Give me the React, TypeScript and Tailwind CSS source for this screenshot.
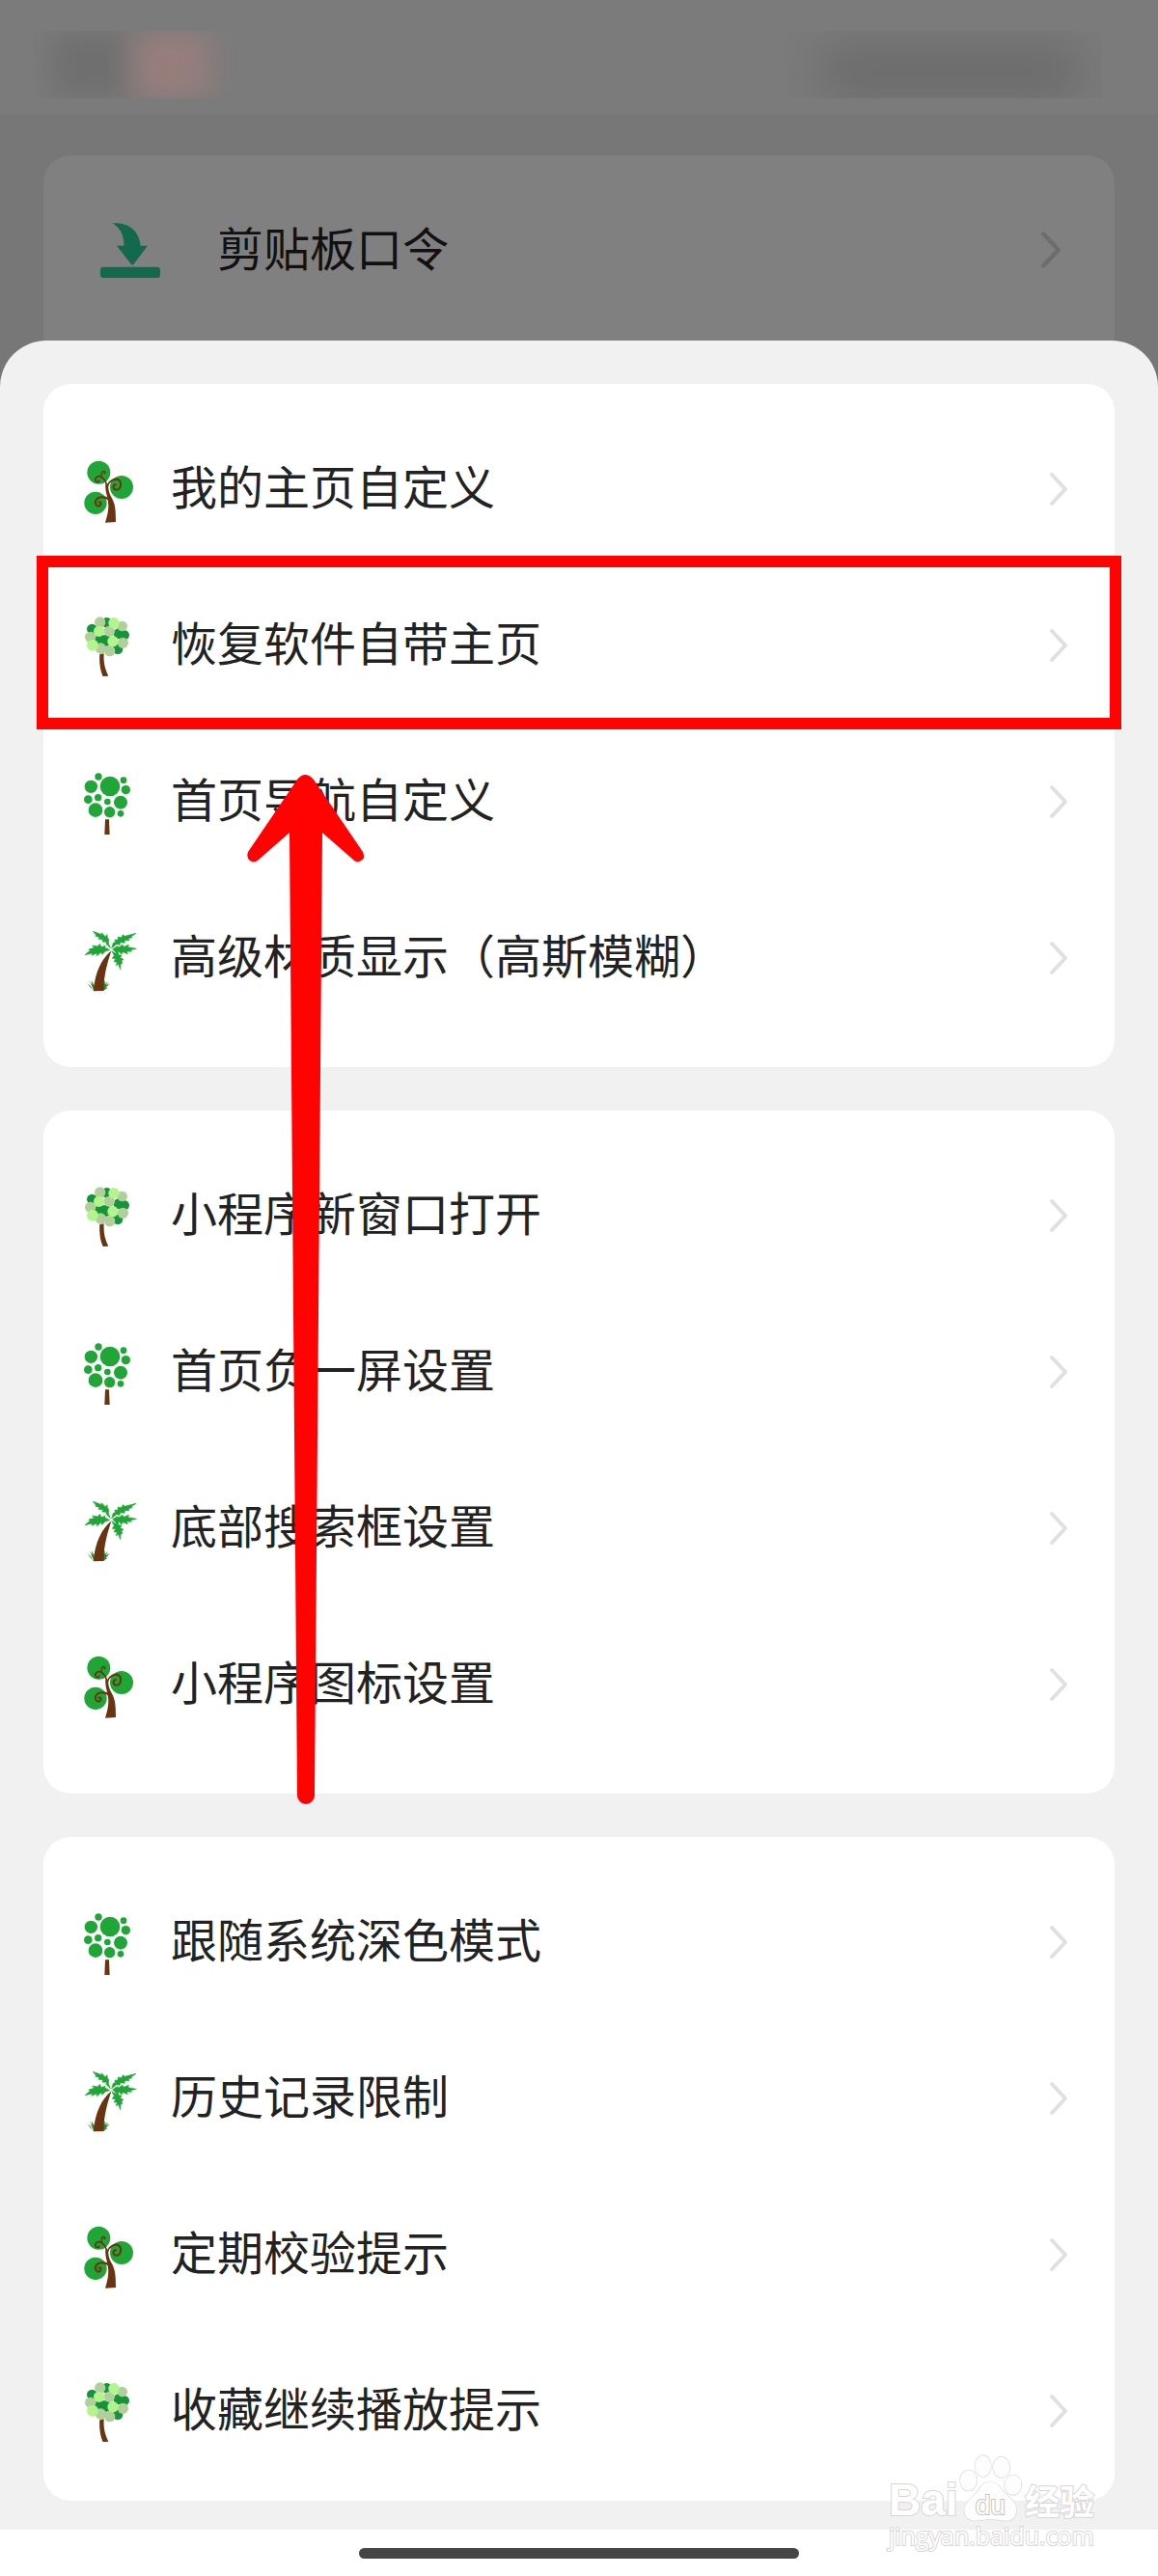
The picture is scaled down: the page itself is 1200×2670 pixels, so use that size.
import React from 'react';

type TreeKind = 'curly' | 'maple' | 'dotted' | 'palm';

interface MenuItem {
  label: string;
  icon: TreeKind;
  highlighted?: boolean;
}

const GROUPS: MenuItem[][] = [
  [
    { label: '我的主页自定义', icon: 'curly' },
    { label: '恢复软件自带主页', icon: 'maple', highlighted: true },
    { label: '首页导航自定义', icon: 'dotted' },
    { label: '高级材质显示（高斯模糊）', icon: 'palm' },
  ],
  [
    { label: '小程序新窗口打开', icon: 'maple' },
    { label: '首页负一屏设置', icon: 'dotted' },
    { label: '底部搜索框设置', icon: 'palm' },
    { label: '小程序图标设置', icon: 'curly' },
  ],
  [
    { label: '跟随系统深色模式', icon: 'dotted' },
    { label: '历史记录限制', icon: 'palm' },
    { label: '定期校验提示', icon: 'curly' },
    { label: '收藏继续播放提示', icon: 'maple' },
  ],
];

const CurlyTree = () => (
  <svg className="h-[72px] w-[60px] shrink-0" viewBox="42 63 180 216" fill="none" aria-hidden="true">
    <circle cx="97" cy="119" r="36" fill="#1fa637" />
    <circle cx="168" cy="165" r="36" fill="#1fa637" />
    <circle cx="87" cy="214" r="35" fill="#1fa637" />
    <path d="M118 158 C116 196 140 206 117 275 L150 273 C150 232 148 214 134 192 C128 180 126 168 127 158 Z" fill="#69340f" />
    <g stroke="#69340f" strokeLinecap="round">
      <path d="M122 162 C120 146 112 138 106 134 C94 126 82 138 88 146 C92 151 99 149 98 144" strokeWidth="5" />
      <path d="M109 138 C102 128 105 115 113 115 C119 116 117 123 113 122" strokeWidth="4" />
      <path d="M124 160 C130 144 148 136 159 142 C170 150 166 174 151 173 C140 172 139 157 150 157" strokeWidth="6" />
      <path d="M132 206 C120 194 98 192 89 204 C82 216 92 228 101 222 C107 217 103 209 97 212" strokeWidth="6" />
    </g>
  </svg>
);

const MapleTree = () => (
  <svg className="h-[72px] w-[60px] shrink-0" viewBox="42 39 180 216" aria-hidden="true">
    <path d="M100 174 C98 200 102 226 110 243 L127 242 C116 220 111 198 113 172 Z" fill="#69340f" />
    <g fill="#15943a">
      <circle cx="122" cy="76" r="16" />
      <circle cx="76" cy="96" r="16" />
      <circle cx="160" cy="110" r="17" />
      <circle cx="176" cy="115" r="16" />
      <circle cx="102" cy="130" r="18" />
      <circle cx="118" cy="132" r="18" />
      <circle cx="156" cy="158" r="16" />
    </g>
    <g fill="#b0cf9b">
      <circle cx="170" cy="87" r="16" />
      <circle cx="101" cy="75" r="17" />
      <circle cx="130" cy="103" r="17" />
      <circle cx="71" cy="121" r="17" />
      <circle cx="172" cy="139" r="17" />
      <circle cx="103" cy="156" r="17" />
      <circle cx="131" cy="164" r="17" />
    </g>
    <g fill="#b2f58c">
      <circle cx="144" cy="77" r="17" />
      <circle cx="98" cy="103" r="17" />
      <circle cx="141" cy="134" r="17" />
      <circle cx="78" cy="146" r="18" />
    </g>
  </svg>
);

const DottedTree = () => (
  <svg className="h-[72px] w-[60px] shrink-0" viewBox="42 45 180 216" aria-hidden="true">
    <g fill="#1fa637">
      <circle cx="96" cy="75" r="11" />
      <circle cx="132" cy="105" r="31" />
      <circle cx="174" cy="86" r="10" />
      <circle cx="73" cy="106" r="20" />
      <circle cx="181" cy="116" r="14" />
      <circle cx="64" cy="146" r="13" />
      <circle cx="95" cy="140" r="11" />
      <circle cx="124" cy="153" r="10" />
      <circle cx="165" cy="155" r="21" />
      <circle cx="87" cy="179" r="22" />
      <circle cx="131" cy="185" r="17" />
      <circle cx="165" cy="190" r="10" />
    </g>
    <path d="M117 208 H129 L131 255 H115 Z" fill="#69340f" />
  </svg>
);

const PalmTree = () => (
  <svg className="h-[72px] w-[60px] shrink-0" viewBox="42 51 180 216" aria-hidden="true">
    <g fill="#1fa637" stroke="#1fa637" strokeWidth="2">
      <path d="M133 128 L127 112 L128 100 L124 96 L123 86 L117 92 L106 80 L107 86 L79 76 L89 88 L86 90 L100 95 L96 100 L110 101 L108 108 L121 109 L120 115 Z" />
      <path d="M137 128 L142 112 L148 110 L147 102 L156 103 L157 93 L168 95 L172 86 L178 91 L213 82 L198 92 L201 95 L189 98 L192 104 L178 104 L177 112 L164 110 L162 118 L152 116 Z" />
      <path d="M131 134 L116 126 L117 121 L105 125 L100 115 L94 123 L77 120 L83 127 L66 132 L70 136 L54 149 L77 144 L76 151 L90 144 L92 152 L104 141 L108 148 L117 138 Z" />
      <path d="M140 132 L154 122 L159 126 L170 118 L176 124 L190 118 L188 125 L214 130 L196 134 L199 139 L184 138 L187 146 L172 140 L168 147 L160 139 L153 143 Z" />
      <path d="M137 137 L148 144 L157 140 L158 149 L168 150 L164 158 L174 163 L167 168 L171 174 L165 178 L164 194 L158 178 L151 182 L154 172 L144 170 L150 161 L139 160 L145 151 Z" />
    </g>
    <path
      d="M82 260 L67 228 L76 242 L75 229 L84 246 Z M79 260 L61 238 L72 247 Z M80 262 L63 252 Z M109 258 L110 240 L117 228 L116 240 L126 232 L119 243 L131 238 L119 251 L125 251 L112 260 Z"
      fill="#2c8a35"
    />
    <path d="M134 138 C108 160 86 200 80 262 L113 261 C112 232 116 196 135 140 Z" fill="#69340f" />
  </svg>
);

const TREES: Record<TreeKind, React.FC> = {
  curly: CurlyTree,
  maple: MapleTree,
  dotted: DottedTree,
  palm: PalmTree,
};

const DownloadIcon = () => (
  <svg className="h-[57px] w-[62px] shrink-0" viewBox="72 97 186 171" fill="#12694d" aria-hidden="true">
    <path d="M110 98 C160 96 192 120 197 168 H219 L175 226 Q172 230 168 226 L123 168 H145 C146 140 137 116 110 98 Z" />
    <rect x="72" y="234" width="186" height="34" rx="10" />
  </svg>
);

const Chevron = ({ className }: { className: string }) => (
  <svg className={className} viewBox="0 0 20 36" fill="none" stroke="currentColor" strokeWidth="4" aria-hidden="true">
    <path d="M3 3 L17 18 L3 33" strokeLinecap="round" strokeLinejoin="round" />
  </svg>
);

const MenuRow = ({ item }: { item: MenuItem }) => {
  const Tree = TREES[item.icon];
  return (
    <li className="relative">
      <button type="button" className="flex h-[162px] w-full items-center pr-12 pl-[39px] text-left">
        <Tree />
        <span className="ml-[33px] flex-1 pb-2.5 text-[48px] leading-[64px] whitespace-nowrap">{item.label}</span>
        <Chevron className="h-9 w-5 text-[#e0e0e0]" />
      </button>
      {item.highlighted && (
        <div className="pointer-events-none absolute -inset-x-[7px] -top-3 -bottom-[6px] z-10 border-12 border-[#ff0303]" />
      )}
    </li>
  );
};

const StatusBar = () => (
  <header className="flex h-[118px] items-center justify-between overflow-hidden bg-[#7b7b7b] pt-4 pr-[58px] pl-[34px]">
    <div className="flex h-[70px] w-[220px] overflow-hidden">
      <div className="ml-5 h-full w-[84px] bg-[#6f6f6f] blur-lg" />
      <div className="h-full w-20 bg-[#977e7c] blur-lg" />
    </div>
    <div className="h-[70px] w-[330px] overflow-hidden pt-4 pr-6 pl-10">
      <div className="h-full w-full bg-[#6a6a6a] blur-xl" />
    </div>
  </header>
);

const UpArrow = () => (
  <svg
    className="pointer-events-none absolute top-[803px] left-[256px] z-20 h-[1067px] w-[122px]"
    viewBox="256 803 122 1067"
    fill="#ff0303"
    aria-hidden="true"
  >
    <path d="M308 808 Q316 798 325 808 L376 883 Q379 890 374 892 Q370 895 366 891 L334 863 L326 1861 A9 9 0 0 1 308 1861 L300 863 L268 891 Q264 895 259 892 Q255 889 257 883 Z" />
  </svg>
);

const Watermark = () => (
  <div className="pointer-events-none absolute right-[66px] bottom-7 z-20 w-[213px] text-white [paint-order:stroke] [-webkit-text-stroke:2px_#d6d6d6]">
    <div className="flex h-[70px] items-end justify-between">
      <span className="pb-1 font-['Liberation_Sans',sans-serif] text-[46px] leading-[38px] font-bold">Bai</span>
      <svg className="h-[70px] w-[66px]" viewBox="280 123 198 210" fill="#fdfdfd" stroke="#d8d8d8" strokeWidth="4" aria-hidden="true">
        <ellipse cx="309" cy="204" rx="26" ry="32" />
        <ellipse cx="354" cy="159" rx="25" ry="33" />
        <ellipse cx="411" cy="163" rx="26" ry="32" />
        <ellipse cx="447" cy="218" rx="26" ry="31" />
        <path d="M376 208 C402 208 410 232 424 246 C440 262 459 272 458 298 C455 330 430 332 410 328 C388 324 366 324 344 328 C318 332 298 326 296 298 C296 272 318 262 332 244 C346 226 352 208 376 208 Z" />
        <text x="377" y="308" textAnchor="middle" fontSize="84" fontFamily="Liberation Sans, sans-serif" stroke="#c4c4c4" strokeWidth="6">
          du
        </text>
      </svg>
      <span className="pb-1 text-[36px] leading-[38px] font-bold">经验</span>
    </div>
    <div className="font-['Open_Sans',sans-serif] text-[25px] leading-7 whitespace-nowrap">jingyan.baidu.com</div>
  </div>
);

const App: React.FC = () => {
  return (
    <div className="relative flex min-h-screen flex-col bg-[#777777] font-['Noto_Sans_CJK_SC',sans-serif] text-[#222222]">
      <StatusBar />

      {/* Page underneath the sheet */}
      <div className="px-[45px] pt-[43px]">
        <div className="h-[240px] rounded-[28px] bg-[#808080]">
          <button type="button" className="flex h-[196px] w-full items-center pr-[55px] pl-[59px] text-left text-[#111111]">
            <DownloadIcon />
            <span className="ml-[59px] flex-1 pb-2 text-[48px] leading-[64px]">剪贴板口令</span>
            <Chevron className="h-10 w-[22px] text-[#6d6d6d]" />
          </button>
        </div>
      </div>

      {/* Bottom sheet */}
      <main className="relative -mt-12 flex flex-1 flex-col gap-[45px] rounded-t-[48px] bg-[#f1f1f1] px-[45px] pt-[45px] pb-[30px]">
        {GROUPS.map((items, index) => (
          <ul key={index} className="rounded-[28px] bg-white pt-7 pb-8 last:pb-3">
            {items.map((item) => (
              <MenuRow key={item.label} item={item} />
            ))}
          </ul>
        ))}
      </main>

      <footer className="flex h-12 items-center justify-center bg-white">
        <div className="h-[11px] w-[38%] rounded-full bg-[#464646]" />
      </footer>

      <UpArrow />
      <Watermark />
    </div>
  );
};

export default App;
